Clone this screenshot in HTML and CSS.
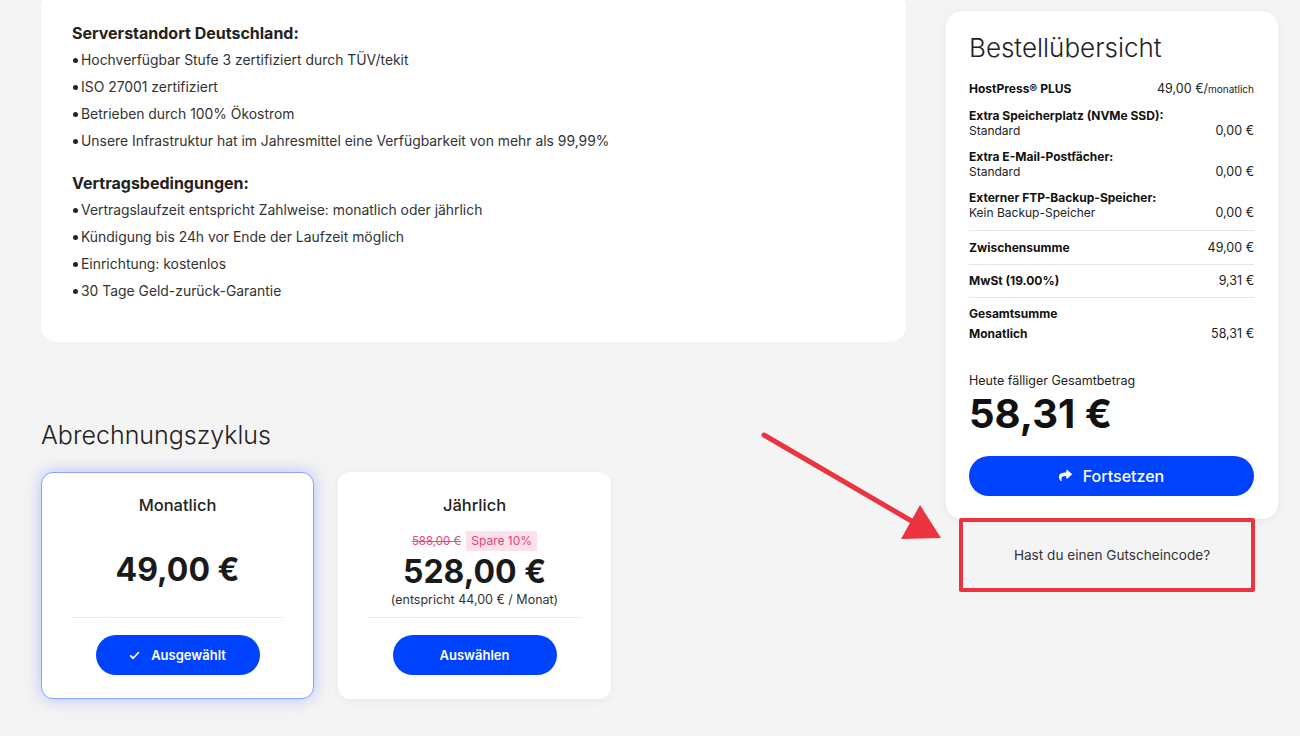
FILE: index.html
```html
<!DOCTYPE html>
<html lang="de">
<head>
<meta charset="utf-8">
<title>Bestellübersicht</title>
<link rel="stylesheet" href="styles.css">
</head>
<body>
<div class="page">
  <div class="main">
    <section class="info-card">
      <h3 class="info-title">Serverstandort Deutschland:</h3>
      <ul class="info-list">
        <li>Hochverfügbar Stufe 3 zertifiziert durch TÜV/tekit</li>
        <li>ISO 27001 zertifiziert</li>
        <li>Betrieben durch 100% Ökostrom</li>
        <li>Unsere Infrastruktur hat im Jahresmittel eine Verfügbarkeit von mehr als 99,99%</li>
      </ul>
      <h3 class="info-title info-title-second">Vertragsbedingungen:</h3>
      <ul class="info-list">
        <li>Vertragslaufzeit entspricht Zahlweise: monatlich oder jährlich</li>
        <li>Kündigung bis 24h vor Ende der Laufzeit möglich</li>
        <li>Einrichtung: kostenlos</li>
        <li>30 Tage Geld-zurück-Garantie</li>
      </ul>
    </section>

    <h2 class="cycle-heading">Abrechnungszyklus</h2>
    <div class="cycles">
      <div class="cycle-card selected">
        <div class="cycle-name">Monatlich</div>
        <div class="cycle-price-area monthly">
          <div class="cycle-price">49,00 €</div>
        </div>
        <div class="cycle-sep"></div>
        <button class="cycle-btn">
          <svg class="check-icon" viewBox="0 0 16 16" width="11" height="11"><path d="M2.5 8.5l3.5 3.5 7.5-8" fill="none" stroke="#fff" stroke-width="2.6" stroke-linecap="round" stroke-linejoin="round"/></svg>
          Ausgewählt
        </button>
      </div>
      <div class="cycle-card">
        <div class="cycle-name">Jährlich</div>
        <div class="cycle-price-area yearly">
          <div class="discount-row">
            <span class="old-price">588,00 €</span>
            <span class="save-badge">Spare 10%</span>
          </div>
          <div class="cycle-price">528,00 €</div>
          <div class="cycle-sub">(entspricht 44,00 € / Monat)</div>
        </div>
        <div class="cycle-sep"></div>
        <button class="cycle-btn">Auswählen</button>
      </div>
    </div>
  </div>

  <aside class="side">
    <div class="summary">
      <h1 class="summary-title">Bestellübersicht</h1>
      <div class="row product">
        <span class="label">HostPress® PLUS</span>
        <span class="value">49,00 €/<small>monatlich</small></span>
      </div>
      <div class="item">
        <div class="label">Extra Speicherplatz (NVMe SSD):</div>
        <div class="row"><span class="sub">Standard</span><span class="value">0,00 €</span></div>
      </div>
      <div class="item">
        <div class="label">Extra E-Mail-Postfächer:</div>
        <div class="row"><span class="sub">Standard</span><span class="value">0,00 €</span></div>
      </div>
      <div class="item">
        <div class="label">Externer FTP-Backup-Speicher:</div>
        <div class="row"><span class="sub">Kein Backup-Speicher</span><span class="value">0,00 €</span></div>
      </div>
      <div class="total-row">
        <span class="label">Zwischensumme</span><span class="value">49,00 €</span>
      </div>
      <div class="total-row">
        <span class="label">MwSt (19.00%)</span><span class="value">9,31 €</span>
      </div>
      <div class="total-row grand">
        <div class="label">Gesamtsumme</div>
        <div class="row"><span class="label">Monatlich</span><span class="value">58,31 €</span></div>
      </div>
      <div class="due-label">Heute fälliger Gesamtbetrag</div>
      <div class="due-amount">58,31 €</div>
      <button class="continue-btn">
        <svg class="share-icon" viewBox="0 0 512 512" width="13" height="13"><path fill="#fff" d="M503.7 189.8L327.7 37.9C312.3 24.5 288 35.3 288 56v80.1C127.4 137.9 0 170.1 0 322.3c0 61.4 39.6 122.3 83.3 154.1 13.7 9.9 33.1-2.5 28.1-18.6C66.1 312.8 132.9 274.3 288 272.1V360c0 20.7 24.3 31.5 39.7 18.2l176-152c11.1-9.6 11.1-26.8 0-36.4z"/></svg>
        Fortsetzen
      </button>
    </div>
    <div class="coupon">Hast du einen Gutscheincode?</div>
  </aside>

  <svg class="annot-arrow" width="200" height="130" viewBox="750 420 200 130">
    <line x1="764" y1="435" x2="915" y2="523" stroke="#ec3440" stroke-width="5" stroke-linecap="round"/>
    <polygon points="941,538 901,539 920,505" fill="#ec3440"/>
  </svg>
</div>
</body>
</html>
```
FILE: styles.css
```css
* { box-sizing: border-box; }

html, body {
  margin: 0;
  padding: 0;
  background: #f4f4f4;
  font-family: Inter, "Noto Sans", "Liberation Sans", sans-serif;
  color: #222;
}

.page {
  position: relative;
  display: flex;
  gap: 40px;
  padding: 11px 22px 0 41px;
  height: 736px;
  overflow: hidden;
}

.main {
  width: 865px;
  flex: none;
}

.info-card {
  margin-top: -20px;
  background: #fff;
  border-radius: 16px;
  padding: 32px 31px 37px;
}

.info-title {
  margin: 0 0 4px;
  font-size: 16px;
  line-height: 20px;
  font-weight: 700;
  color: #222;
}

.info-title-second {
  margin-top: 18px;
}

.info-list {
  list-style: none;
  margin: 0;
  padding: 0;
}

.info-list li {
  font-size: 13.9px;
  line-height: 27px;
  color: #333;
}

.info-list li::before {
  content: "";
  display: inline-block;
  width: 5px;
  height: 5px;
  border-radius: 50%;
  background: #222;
  margin: 0 3px 2px 1px;
  vertical-align: middle;
}

.cycle-heading {
  margin: 78px 0 22px;
  font-size: 25px;
  line-height: 30px;
  font-weight: 300;
  color: #222;
}

.cycles {
  display: flex;
  gap: 24px;
}

.cycle-card {
  width: 273px;
  height: 227px;
  background: #fff;
  border-radius: 12px;
  padding: 23px 30px 24px;
  display: flex;
  flex-direction: column;
  align-items: center;
  box-shadow: 0 2px 10px rgba(0, 0, 0, 0.05);
}

.cycle-card.selected {
  border: 1px solid #8aa2ff;
  box-shadow: 0 0 16px rgba(70, 110, 255, 0.38);
  padding: 22px 30px 23px;
}

.cycle-name {
  font-size: 16.5px;
  line-height: 20px;
  font-weight: 500;
  color: #222;
}

.cycle-price-area {
  height: 96px;
  width: 100%;
  display: flex;
  flex-direction: column;
  align-items: center;
}

.cycle-price-area.monthly { padding-top: 37px; }
.cycle-price-area.yearly { padding-top: 16px; }

.discount-row {
  display: flex;
  align-items: center;
  gap: 5px;
  height: 20px;
}

.old-price {
  font-size: 11.5px;
  color: #e4467f;
  text-decoration: line-through;
}

.save-badge {
  font-size: 12px;
  line-height: 20px;
  padding: 0 5px;
  background: #fde1ea;
  color: #e4407a;
}

.cycle-price {
  font-size: 32px;
  line-height: 36px;
  font-weight: 700;
  color: #1a1a1a;
  margin-top: 3px;
}

.monthly .cycle-price { margin-top: 0; }

.cycle-sub {
  margin-top: 2px;
  font-size: 12.5px;
  line-height: 16px;
  color: #333;
}

.cycle-sep {
  width: 100%;
  height: 1px;
  background: #e9e9e9;
  margin-top: 7px;
}

.cycle-btn {
  margin-top: 17px;
  width: 164px;
  height: 40px;
  border: none;
  border-radius: 20px;
  background: #0043ff;
  color: #fff;
  font-family: inherit;
  font-size: 13px;
  font-weight: 600;
  display: flex;
  align-items: center;
  justify-content: center;
  gap: 11px;
}

.side {
  width: 332px;
  flex: none;
}

.summary {
  background: #fff;
  border-radius: 16px;
  padding: 21px 24px 23px 23px;
  box-shadow: 0 2px 10px rgba(0, 0, 0, 0.06);
}

.summary-title {
  margin: 0;
  font-size: 26px;
  line-height: 32px;
  font-weight: 300;
  color: #222;
}

.row {
  display: flex;
  justify-content: space-between;
  align-items: baseline;
}

.label {
  font-size: 12px;
  line-height: 15px;
  font-weight: 700;
  color: #111;
}

.value {
  font-size: 12.5px;
  line-height: 15px;
  color: #222;
}

.value small {
  font-size: 10px;
}

.sub {
  font-size: 12px;
  line-height: 15px;
  color: #222;
}

.product {
  margin-top: 16.5px;
}

.item {
  margin-top: 11px;
}

.total-row {
  display: flex;
  justify-content: space-between;
  align-items: baseline;
  border-top: 1px solid #e6e6e6;
  padding: 8px 0;
}

.total-row .label,
.total-row .value {
  line-height: 16px;
}

.item + .total-row {
  margin-top: 10px;
  padding-top: 9px;
}

.total-row.grand {
  display: block;
  padding: 6px 0 0;
}

.total-row.grand .label,
.total-row.grand .value {
  line-height: 20px;
}

.due-label {
  margin-top: 29px;
  font-size: 12.5px;
  line-height: 16px;
  color: #222;
}

.due-amount {
  margin-top: 3px;
  font-size: 40px;
  line-height: 44px;
  font-weight: 700;
  color: #111;
}

.continue-btn {
  margin-top: 20px;
  width: 100%;
  height: 40px;
  border: none;
  border-radius: 20px;
  background: #0043ff;
  color: #fff;
  font-family: inherit;
  font-size: 16px;
  font-weight: 500;
  display: flex;
  align-items: center;
  justify-content: center;
  gap: 11px;
}

.coupon {
  margin: -1px 23px 0 13px;
  height: 74px;
  border: 4px solid #ec3440;
  border-radius: 2px;
  display: flex;
  align-items: center;
  justify-content: center;
  padding: 0 0 0 10px;
  font-size: 13.6px;
  color: #333;
}

.annot-arrow {
  position: absolute;
  left: 750px;
  top: 420px;
  overflow: visible;
}
```
